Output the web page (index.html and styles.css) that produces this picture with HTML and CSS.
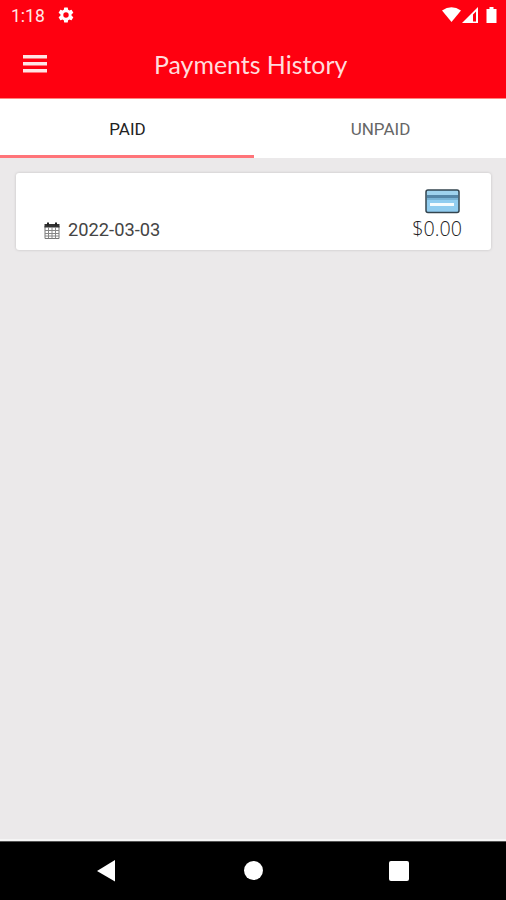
FILE: index.html
```html
<!DOCTYPE html>
<html lang="en">
<head>
<meta charset="utf-8">
<title>Payments History</title>
<link rel="stylesheet" href="styles.css">
</head>
<body>
<div class="screen">
  <div class="status">
    <span class="clock">1:18</span>
    <svg class="gear" width="18" height="18" viewBox="0 0 24 24"><path fill="#fff" fill-rule="evenodd" d="M19.4 13a7.500 7.500 0 0 0 0-2l2.100-1.600a.5.5 0 0 0 .1-.7l-2-3.400a.5.5 0 0 0-.6-.2l-2.500 1a7.400 7.400 0 0 0-1.700-1L14.400 2.400A.5.5 0 0 0 14 2h-4a.5.5 0 0 0-.5.4l-.4 2.700a7.400 7.400 0 0 0-1.700 1l-2.500-1a.5.5 0 0 0-.6.200l-2 3.400a.5.5 0 0 0 .1.700L4.600 11a7.500 7.500 0 0 0 0 2l-2.200 1.600a.5.5 0 0 0-.1.700l2 3.400c.1.200.4.300.6.200l2.500-1a7.400 7.400 0 0 0 1.700 1l.4 2.700c0 .2.200.4.5.4h4c.2 0 .4-.2.400-.4l.4-2.700a7.400 7.400 0 0 0 1.700-1l2.500 1c.2.100.5 0 .6-.2l2-3.400a.5.5 0 0 0-.1-.7zM12 15.600a3.600 3.600 0 1 1 0-7.200 3.600 3.600 0 0 1 0 7.200z"/></svg>
    <svg class="signals" width="55" height="18" viewBox="0 0 55 18"><g fill="#fff"><path d="M0 4.500Q9.500-2 19 4.500L9.500 16z"/><path fill-rule="evenodd" d="M20 17 36 1v16zM31 8.500V15.500H34V5.500z"/><path d="M44.500 3h3V1h4v2h3v14h-10z"/></g></svg>
  </div>
  <header class="appbar">
    <svg class="menu" width="24" height="18" viewBox="0 0 24 18"><path fill="#ffe4e4" d="M0 0h24v3.500H0zM0 7h24v3.500H0zM0 14h24v3.500H0z"/></svg>
    <h1>Payments History</h1>
  </header>
  <nav class="tabs">
    <div class="tab active"><span>PAID</span></div>
    <div class="tab"><span>UNPAID</span></div>
  </nav>
  <main>
    <article class="card">
      <div class="date">
        <svg width="16" height="18" viewBox="0 0 16 18"><path fill="#fff" stroke="#777" d="M1 4h14v12.500H1z"/><path fill="#333" d="M.5 2h15v3.500H.5z"/><path fill="#222" d="M3 .5h2v3H3zM11 .5h2v3h-2z"/><path fill="none" stroke="#888" d="M1 8.500h14M1 11.500h14M1 14h14M4.500 5v11.500M8 5v11.500M11.500 5v11.500"/></svg>
        <span>2022-03-03</span>
      </div>
      <div class="payment">
        <svg width="35" height="25" viewBox="0 0 35 25"><rect x="1" y="1" width="33" height="22.500" rx="2" fill="#91cdf0" stroke="#34454f" stroke-width="1.500"/><path fill="#9fd3ee" d="M2 2h31v4H2z"/><path fill="#5587a8" d="M2 6h31v3H2z"/><path fill="#79b4d6" d="M2 9h31v2H2z"/><path fill="#f5fcff" d="M5 14h24v3H5z"/></svg>
        <span>$0.00</span>
      </div>
    </article>
  </main>
  <footer class="navbar">
    <svg class="back" width="19" height="22" viewBox="0 0 19 22"><path fill="#fff" d="M18 0v21.500L0 11z"/></svg>
    <span class="home"></span>
    <span class="recent"></span>
  </footer>
</div>
</body>
</html>
```
FILE: styles.css
```css
* { box-sizing: border-box; }
body { margin: 0; font-family: Roboto, "Liberation Sans", sans-serif; }
svg { display: block; flex: none; }
.screen { width: 506px; height: 900px; display: flex; flex-direction: column; background: #ebe9ea; }
.status { height: 32px; background: #ff0010; display: flex; align-items: flex-start; padding: 6px 9px 0 11px; }
.clock { width: 46px; font-size: 17.5px; line-height: 21px; color: #ffe6e6; white-space: nowrap; }
.signals { margin: 0 0 0 auto; }
.appbar { height: 67px; background: #ff0010; border-bottom: 1px solid #ff8580; display: flex; padding: 0 23px; }
.menu { margin-top: 23px; }
h1 { margin: 16px 0 0 107px; font: 400 24.9px/32px Lato, sans-serif; color: #ffdcdc; white-space: nowrap; }
.tabs { height: 59px; display: flex; background: #fff; }
.tab { flex: 1; display: flex; justify-content: center; padding: 20px 0 0 1px; font-size: 17px; line-height: 20px; color: #666; }
.tab.active { flex: 0 0 254px; color: #222; border-bottom: 3px solid #ff7479; }
main { flex: 1; padding: 15px 15px 0 16px; border-bottom: 2px solid #f5f5f5; }
.card { height: 77px; background: #fff; border-radius: 3px; box-shadow: 0 0 3px rgba(0,0,0,.18); display: flex; justify-content: space-between; padding: 0 29px 0 28px; }
.date { display: flex; align-items: flex-start; gap: 8px; padding-top: 47px; font-size: 18.3px; line-height: 20px; color: #444; }
.date svg { margin-top: 2px; }
.payment { display: flex; flex-direction: column; align-items: flex-end; padding-top: 16px; font: 300 19.7px/24px "Open Sans", sans-serif; color: #222; }
.payment svg { margin-right: 2px; }
.payment span { margin-top: 3px; }
.navbar { height: 59px; background: #000; border-top: 1px solid #555; display: flex; align-items: flex-start; padding: 18px 0 0 97px; }
.home { width: 19px; height: 19px; margin: 1px 0 0 128px; border-radius: 50%; background: #fff; }
.recent { width: 20px; height: 20px; margin: 1px 0 0 126px; border-radius: 2px; background: #fff; }
```
